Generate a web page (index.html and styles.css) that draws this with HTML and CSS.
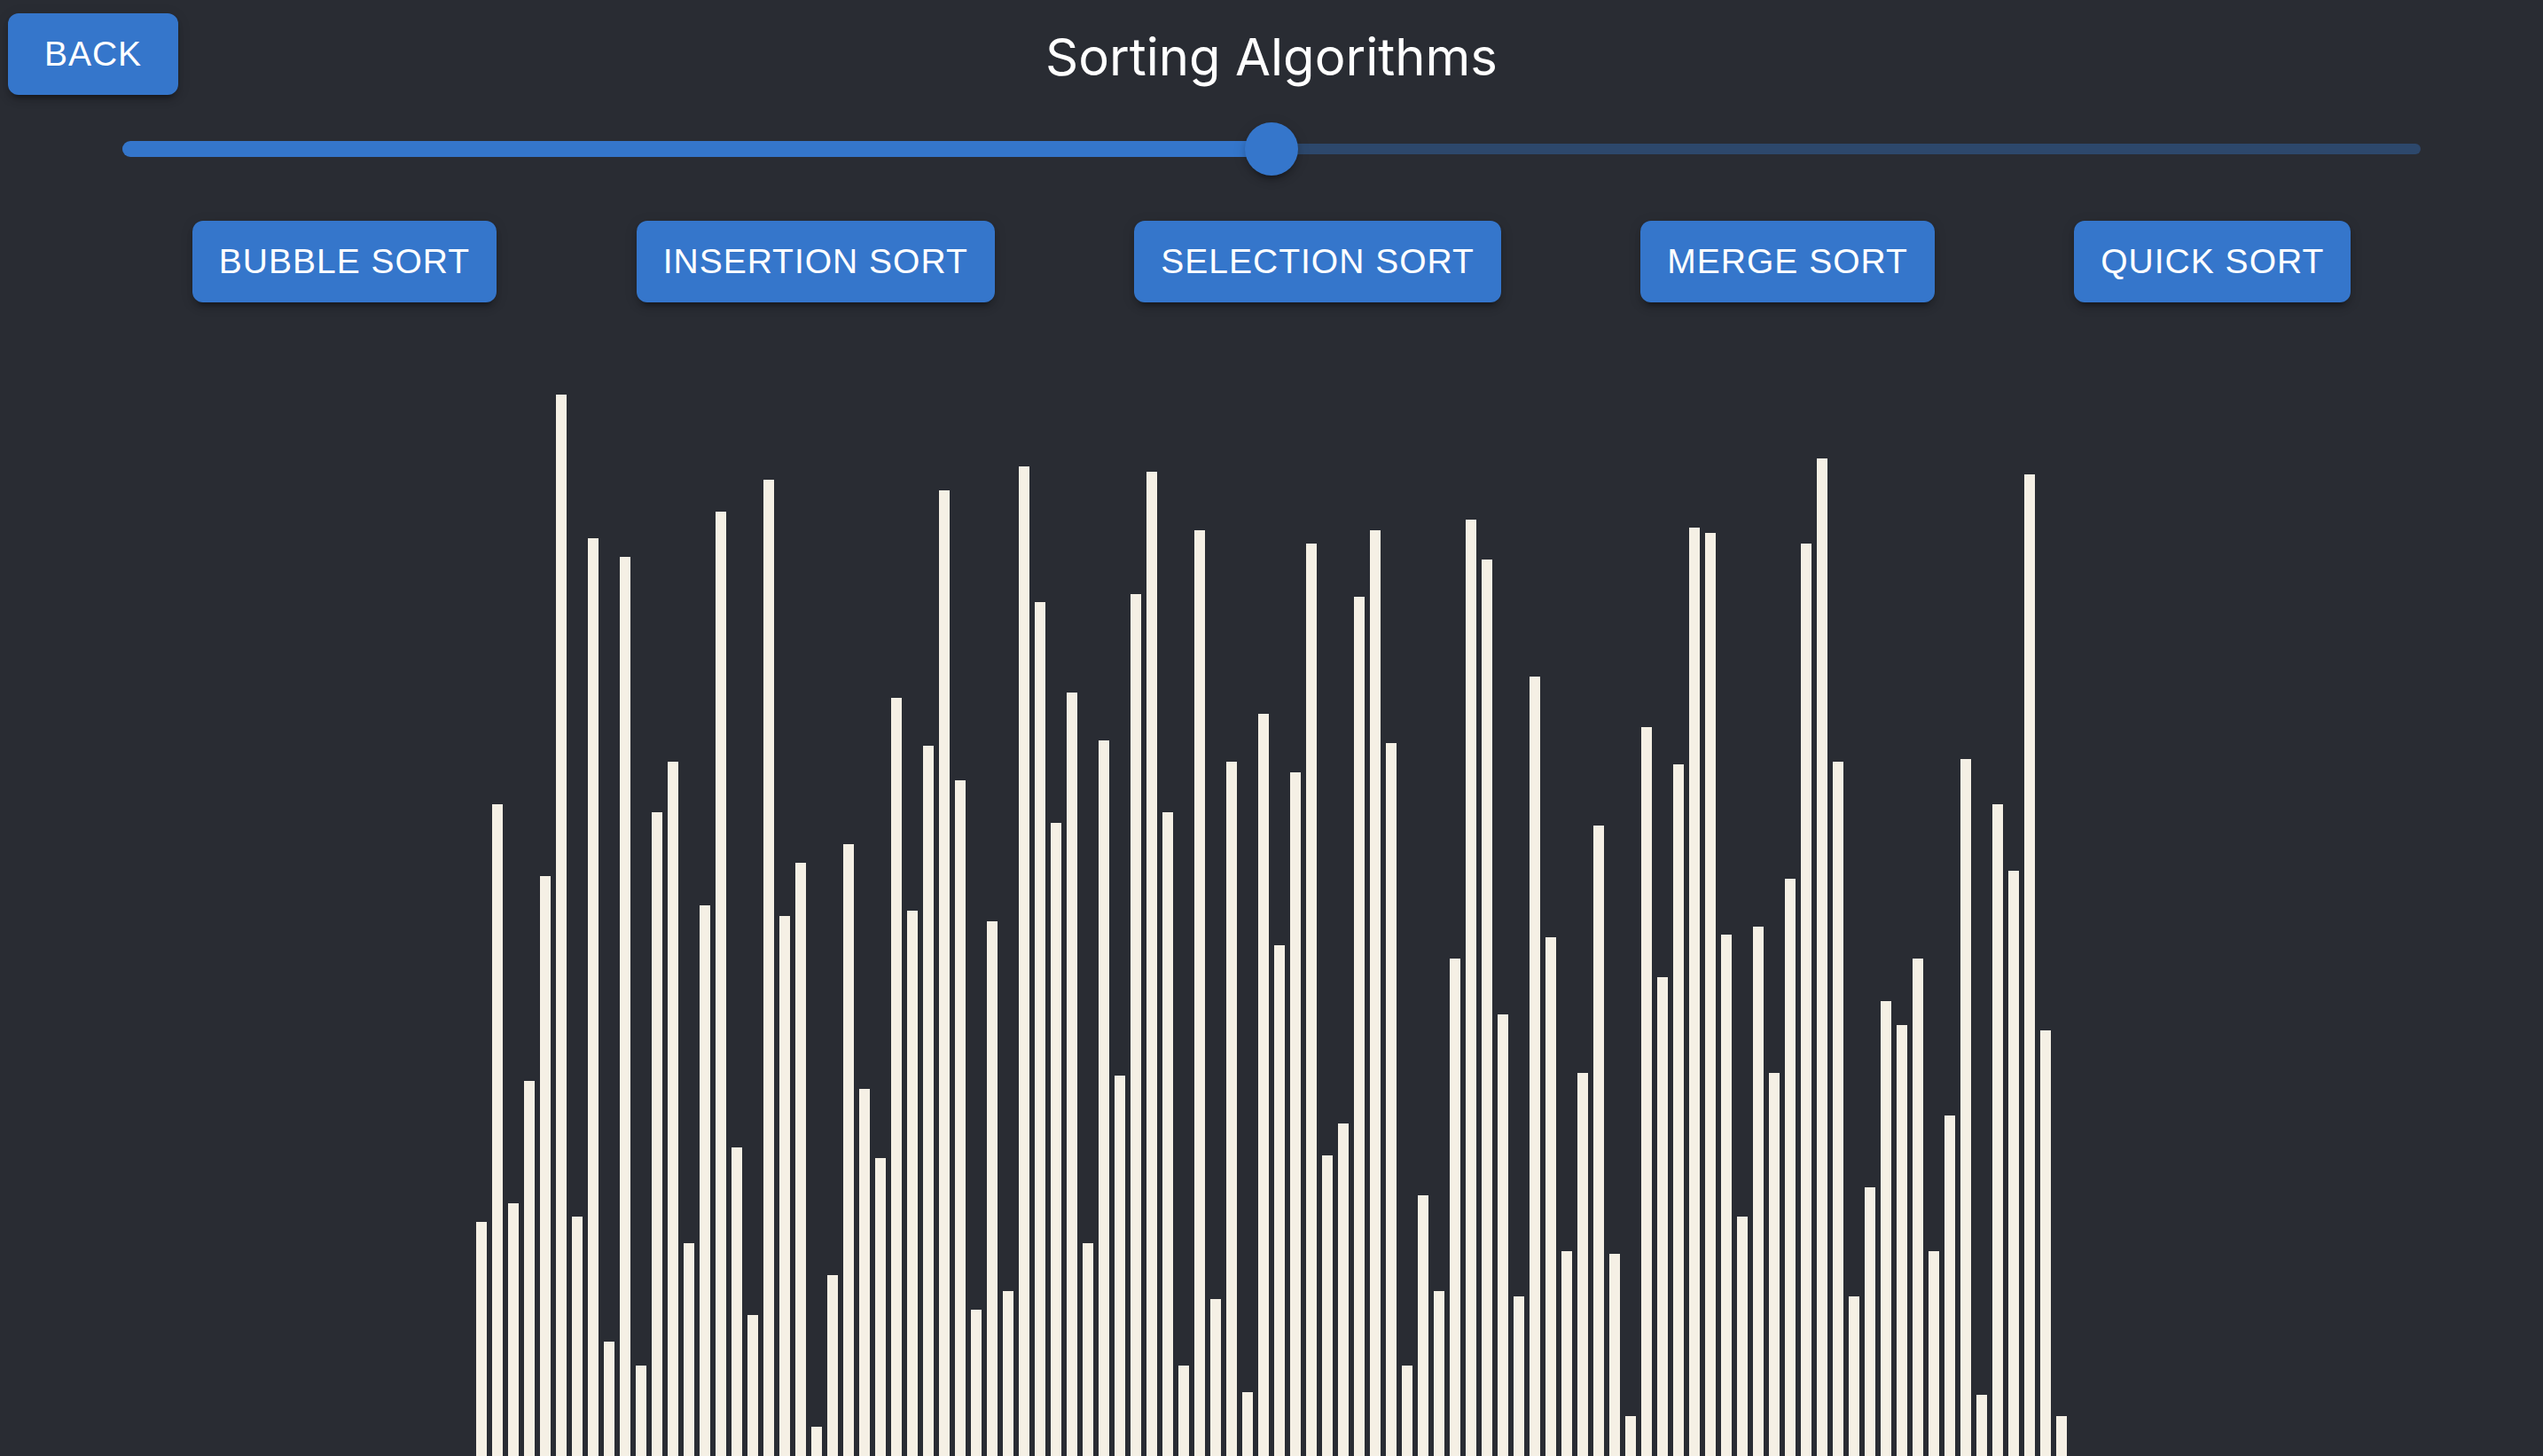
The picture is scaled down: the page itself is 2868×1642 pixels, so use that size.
FILE: index.html
```html
<!DOCTYPE html>
<html lang="en">
<head>
  <meta charset="utf-8">
  <meta name="viewport" content="width=device-width, initial-scale=1">
  <title>Sorting Algorithms</title>
  <link rel="stylesheet" href="styles.css">
</head>
<body>
  <header class="header">
    <button type="button" class="button header-back">BACK</button>
    <h1 class="title">Sorting Algorithms</h1>
  </header>
  <main class="main">
    <section class="controls">
      <div class="slider">
        <span class="slider-rail"></span>
        <span class="slider-fill"></span>
        <input class="slider-input" type="range" min="0" max="200" value="100" aria-label="Array size">
      </div>
      <div class="algorithms">
        <button type="button" class="button">BUBBLE SORT</button>
        <button type="button" class="button">INSERTION SORT</button>
        <button type="button" class="button">SELECTION SORT</button>
        <button type="button" class="button">MERGE SORT</button>
        <button type="button" class="button">QUICK SORT</button>
      </div>
    </section>
    <div class="chart" id="chart" role="img" aria-label="Values to sort"></div>
  </main>
  <script src="script.js"></script>
</body>
</html>
```
FILE: styles.css
```css
:root {
  --background: #292c33;
  --primary: #3576cb;
  --bar: #f5f0e5;
}

* {
  box-sizing: border-box;
}

body {
  display: flex;
  flex-direction: column;
  min-height: 100vh;
  margin: 0;
  background: var(--background);
  color: #fff;
  font-family: "Liberation Sans", Arial, sans-serif;
}

.header {
  display: grid;
  grid-template-columns: 1fr auto 1fr;
  align-items: start;
  padding: 15px 9px 0;
}

.header-back {
  justify-self: start;
}

.title {
  margin: 0;
  font-family: Inter, sans-serif;
  font-size: 58px;
  font-weight: 400;
  line-height: 98px;
}

.button {
  min-width: 192px;
  padding: 12px 30px;
  border: 0;
  border-radius: 12px;
  background: var(--primary);
  box-shadow:
    0 9px 3px -6px rgba(0, 0, 0, 0.2),
    0 6px 6px 0 rgba(0, 0, 0, 0.14),
    0 3px 15px 0 rgba(0, 0, 0, 0.12);
  color: #fff;
  font-family: inherit;
  font-size: 39px;
  letter-spacing: 1px;
  line-height: 68px;
  white-space: nowrap;
  cursor: pointer;
}

.main {
  display: flex;
  flex: 1;
  flex-direction: column;
}

.controls {
  padding: 25px 138px 101px;
}

.slider {
  display: grid;
  align-items: center;
  height: 60px;
}

.slider > * {
  grid-area: 1 / 1;
}

.slider-rail {
  height: 12px;
  border-radius: 6px;
  background: var(--primary);
  opacity: 0.38;
}

.slider-fill {
  width: 50%;
  height: 18px;
  border-radius: 9px;
  background: var(--primary);
}

.slider-input {
  appearance: none;
  z-index: 1;
  width: 100%;
  height: 60px;
  margin: 0;
  background: transparent;
  cursor: pointer;
}

.slider-input::-webkit-slider-thumb {
  appearance: none;
  width: 60px;
  height: 60px;
  border-radius: 50%;
  background: var(--primary);
  box-shadow:
    0 9px 3px -6px rgba(0, 0, 0, 0.2),
    0 6px 6px 0 rgba(0, 0, 0, 0.14),
    0 3px 15px 0 rgba(0, 0, 0, 0.12);
}

.algorithms {
  display: flex;
  justify-content: space-around;
  margin-top: 51px;
}

.chart {
  display: flex;
  flex: 1;
  align-items: flex-end;
  justify-content: center;
  gap: 6px;
  min-height: 1200px;
}

.bar {
  width: 12px;
  background: var(--bar);
}
```
FILE: script.js
```js
const PIXELS_PER_UNIT = 3;

const values = [
  88, 245, 95, 141, 218, 399, 90, 345, 43, 338,
  34, 242, 261, 80, 207, 355, 116, 53, 367, 203,
  223, 11, 68, 230, 138, 112, 285, 205, 267, 363,
  254, 55, 201, 62, 372, 321, 238, 287, 80, 269,
  143, 324, 370, 242, 34, 348, 59, 261, 24, 279,
  192, 257, 343, 113, 125, 323, 348, 268, 34, 98,
  62, 187, 352, 337, 166, 60, 293, 195, 77, 144,
  237, 76, 15, 274, 180, 260, 349, 347, 196, 90,
  199, 144, 217, 343, 375, 261, 60, 101, 171, 162,
  187, 77, 128, 262, 23, 245, 220, 369, 160, 15,
];

const chart = document.getElementById("chart");

for (const value of values) {
  const bar = document.createElement("div");
  bar.className = "bar";
  bar.style.height = `${value * PIXELS_PER_UNIT}px`;
  chart.append(bar);
}
```
